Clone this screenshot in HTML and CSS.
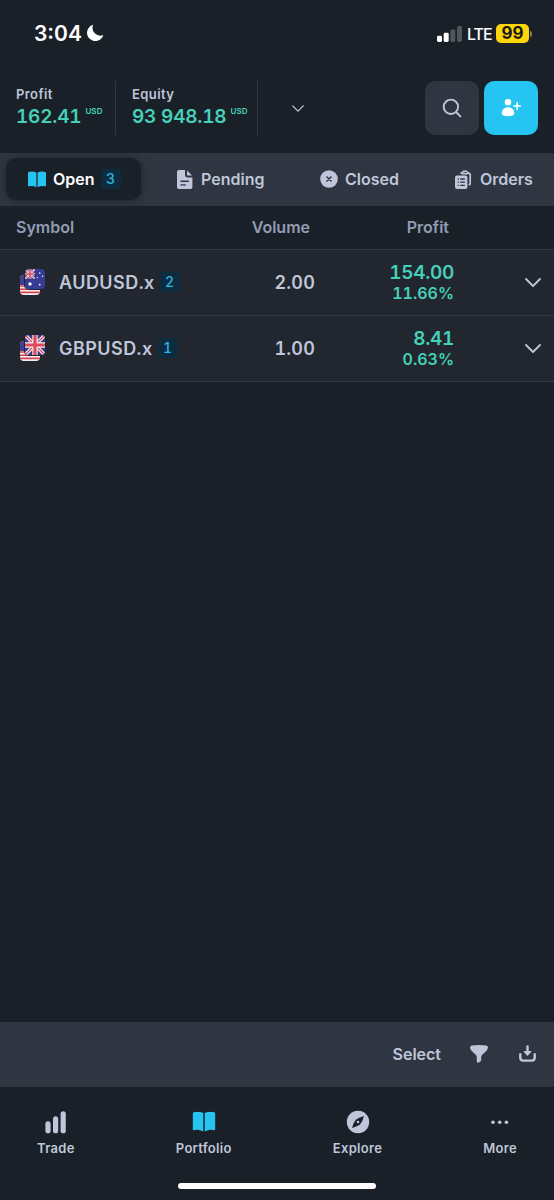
FILE: index.html
```html
<!DOCTYPE html>
<html lang="en">
<head>
    <meta charset="UTF-8">
    <meta name="viewport" content="width=device-width, initial-scale=1.0">
    <title>Portfolio</title>
    <link rel="stylesheet" href="styles.css">
</head>
<body>
    <!-- Shared shapes -->
    <svg class="defs" width="0" height="0">
        <symbol id="book" viewBox="0 0 24 22">
            <path d="M0 2.2Q0 1.2 1 .9Q6-.8 11.2 1.6V21.4Q6 18.6 1 20Q0 20.3 0 19.3ZM12.8 1.6Q18-.8 23 .9Q24 1.2 24 2.2V19.3Q24 20.3 23 20Q18 18.6 12.8 21.4Z"/>
        </symbol>
        <symbol id="chevron" viewBox="0 0 16 9">
            <path d="M1 1l7 7 7-7" fill="none" stroke="currentColor" stroke-width="1.8" stroke-linecap="round" stroke-linejoin="round"/>
        </symbol>
        <symbol id="us" viewBox="0 0 20 20">
            <rect width="20" height="20" fill="#f3eef2"/>
            <path d="M0 1.4h20M0 4.6h20M0 7.8h20M0 11h20M0 14.2h20M0 17.4h20" stroke="#d8454f" stroke-width="1.6"/>
            <rect width="10" height="10" fill="#3a4192"/>
        </symbol>
        <symbol id="gb" viewBox="0 0 20 20">
            <rect width="20" height="20" fill="#35398f"/>
            <path d="M0 0l20 20M20 0L0 20" stroke="#f3eef2" stroke-width="3.6"/>
            <path d="M0 0l20 20M20 0L0 20" stroke="#dd4a57" stroke-width="1.3"/>
            <path d="M10 0v20M0 10h20" stroke="#f3eef2" stroke-width="5.4"/>
            <path d="M10 0v20M0 10h20" stroke="#dd4a57" stroke-width="3.2"/>
        </symbol>
        <symbol id="au" viewBox="0 0 20 20">
            <rect width="20" height="20" fill="#363b94"/>
            <use href="#gb" width="10" height="10"/>
            <g fill="#fff">
                <circle cx="5" cy="15" r="1.7"/>
                <circle cx="14.7" cy="4" r=".8"/>
                <circle cx="12.3" cy="8.6" r=".7"/>
                <circle cx="17.6" cy="7.2" r=".8"/>
                <circle cx="14.7" cy="15.6" r=".9"/>
            </g>
        </symbol>
    </svg>

    <div class="status-bar">
        <span class="time">3:04</span>
        <svg class="moon" viewBox="0 0 18 18"><path d="M6.5.8A8.8 8.8 0 1 0 17.3 11.7A8.3 8.3 0 0 1 6.5.8Z"/></svg>
        <svg class="signal" viewBox="0 0 25 16">
            <rect y="9.8" width="5" height="6.2" rx="1.4" fill="#fff"/>
            <rect x="6.7" y="6.8" width="5" height="9.2" rx="1.4" fill="#fff"/>
            <rect x="13.3" y="3.6" width="5" height="12.4" rx="1.4" fill="#51555c"/>
            <rect x="20" width="5" height="16" rx="1.4" fill="#51555c"/>
        </svg>
        <span class="carrier">LTE</span>
        <span class="battery">99</span>
        <span class="battery-tip"></span>
    </div>

    <header>
        <div class="stat stat-profit">
            <div class="stat-label">Profit</div>
            <div class="stat-value">162.41<sup>USD</sup></div>
        </div>
        <div class="stat stat-equity">
            <div class="stat-label">Equity</div>
            <div class="stat-value">93 948.18<sup>USD</sup></div>
        </div>
        <svg class="chevron-small"><use href="#chevron"/></svg>
        <button class="btn">
            <svg class="outline" width="20" height="20" viewBox="0 0 20 20" stroke-width="1.9"><circle cx="8.9" cy="8.8" r="7.2"/><path d="M14 14l4.4 4.4"/></svg>
        </button>
        <button class="btn btn-primary">
            <svg width="20" height="20" viewBox="0 0 20 20"><circle cx="7" cy="4.3" r="3.3"/><path d="M.7 15.6C.7 11.8 3.3 9.2 7 9.2S13.3 11.8 13.3 15.6C13.3 17.3 10.6 18.2 7 18.2S.7 17.3.7 15.6Z"/><path d="M16.2 4.7v6.6M12.9 8h6.6" stroke="currentColor" stroke-width="1.7" stroke-linecap="round"/></svg>
        </button>
    </header>

    <nav class="tabs">
        <a class="tab tab-open active">
            <svg width="18" height="17"><use href="#book"/></svg>
            <span>Open</span>
            <span class="badge">3</span>
        </a>
        <a class="tab tab-pending">
            <svg width="16" height="19" viewBox="0 0 16 19"><path d="M2 0H8V5Q8 7.4 10.4 7.4H15.4V17Q15.4 19 13.4 19H2Q0 19 0 17V2Q0 0 2 0Z"/><path d="M10 .4L15.1 5.6H11.2Q10 5.6 10 4.4Z"/><path d="M4 11.3h7.4M4 14.9h4.2" stroke="#303641" stroke-width="1.4" stroke-linecap="round"/></svg>
            <span>Pending</span>
        </a>
        <a class="tab tab-closed">
            <svg width="18" height="18" viewBox="0 0 18 18"><circle cx="9" cy="9" r="8.8"/><path d="M7 7l4 4M11 7l-4 4" stroke="#303641" stroke-width="1.6" stroke-linecap="round"/></svg>
            <span>Closed</span>
        </a>
        <a class="tab tab-orders">
            <svg width="17" height="19" viewBox="0 0 17 19"><path d="M5.4 3.2H13.4Q15.2 3.2 15.2 5V13Q15.2 14.8 13.6 14.8" fill="none" stroke="currentColor" stroke-width="1.7"/><path d="M6 3.2Q7 .2 10 .2T14 3.2L12.6 4.4H7.4Z"/><path d="M8.4 2.4h3.4" stroke="#303641" stroke-width=".8"/><rect y="5.4" width="12.4" height="13.6" rx="2"/><path d="M2.7 9h1.2M2.7 12.2h1.2M2.7 15.4h1.2M5.2 9h4.6M5.2 12.2h4.6M5.2 15.4h4.6" stroke="#303641" stroke-width="1.3"/></svg>
            <span>Orders</span>
        </a>
    </nav>

    <main>
        <div class="row row-head">
            <div class="symbol">Symbol</div>
            <div class="volume">Volume</div>
            <div class="profit">Profit</div>
        </div>
        <div class="row">
            <div class="symbol">
                <div class="flags">
                    <svg class="flag flag-back"><use href="#us"/></svg>
                    <svg class="flag flag-front"><use href="#au"/></svg>
                </div>
                <span class="name">AUDUSD.x</span>
                <span class="badge">2</span>
            </div>
            <div class="volume">2.00</div>
            <div class="profit">
                <div class="amount">154.00</div>
                <div class="percent">11.66%</div>
            </div>
            <svg class="chevron"><use href="#chevron"/></svg>
        </div>
        <div class="row">
            <div class="symbol">
                <div class="flags">
                    <svg class="flag flag-back"><use href="#us"/></svg>
                    <svg class="flag flag-front"><use href="#gb"/></svg>
                </div>
                <span class="name">GBPUSD.x</span>
                <span class="badge">1</span>
            </div>
            <div class="volume">1.00</div>
            <div class="profit">
                <div class="amount">8.41</div>
                <div class="percent">0.63%</div>
            </div>
            <svg class="chevron"><use href="#chevron"/></svg>
        </div>
    </main>

    <div class="toolbar">
        <span class="select">Select</span>
        <svg class="filter" width="18" height="18" viewBox="0 0 18 18"><path d="M1.8.5Q9-.3 16.2.5Q18 .8 18 2.6Q17.8 5 15 7.3L12 10Q11.2 10.8 11.2 12V15.2Q11 16.3 9.2 17.3Q7.2 18.4 6.8 16.5V12Q6.8 10.9 5.9 10L2.5 6.7Q.2 4.6 0 2.6Q0 .8 1.8.5Z"/></svg>
        <svg class="outline" width="17" height="17" viewBox="0 0 17 17" stroke-width="2.4"><path d="M1.3 9.3V12.4Q1.3 15.6 4.4 15.6H12.6Q15.7 15.6 15.7 12.4V9.3"/><path d="M8.5 1.4V7"/><path d="M5.3 6.6H11.7L8.5 10.2Z" fill="currentColor" stroke-width="1.2" stroke-linejoin="round"/></svg>
    </div>

    <nav class="bottom-nav">
        <a>
            <svg viewBox="0 0 24 24"><rect x="1.4" y="11.3" width="5.2" height="12" rx="2.6"/><rect x="9" y="6.2" width="5.2" height="17.1" rx="2.6"/><rect x="16.6" y="1.2" width="5.2" height="22.1" rx="2.6"/></svg>
            Trade
        </a>
        <a>
            <svg class="book"><use href="#book" y="1.5" height="20.5"/></svg>
            Portfolio
        </a>
        <a>
            <svg viewBox="0 0 24 24"><circle cx="12" cy="12" r="11.2"/><path d="M18 6Q16.6 11.6 14.2 14.2Q11.6 16.6 6 18Q7.4 12.4 9.8 9.8Q12.4 7.4 18 6Z" fill="#1a2028"/><circle cx="12" cy="12" r="1.3"/></svg>
            Explore
        </a>
        <a>
            <svg viewBox="0 0 24 24"><circle cx="5" cy="12.2" r="1.8"/><circle cx="11.7" cy="12.2" r="1.8"/><circle cx="18.4" cy="12.2" r="1.8"/></svg>
            More
        </a>
    </nav>
    <div class="home-bar"></div>
</body>
</html>
```
FILE: styles.css
```css
:root {
    --background-color: #1a2028;
    --panel-color: #303641;
    --row-color: #22262f;
    --line-color: #30373f;
    --text-color: #bfc6d9;
    --muted-color: #929cb3;
    --green: #44d1b8;
    --blue: #25c4f1;
}

* {
    margin: 0;
    padding: 0;
    box-sizing: border-box;
}

body {
    height: 1200px;
    display: flex;
    flex-direction: column;
    overflow: hidden;
    font-family: Inter, sans-serif;
    font-weight: 600;
    font-variant-numeric: tabular-nums;
    background-color: var(--background-color);
    color: var(--text-color);
}

svg {
    display: block;
    flex: none;
    fill: currentColor;
}

.outline {
    fill: none;
    stroke: currentColor;
    stroke-linecap: round;
}

.defs {
    position: absolute;
}

.status-bar {
    height: 67px;
    padding: 0 22px 0 34px;
    display: flex;
    align-items: center;
    color: #fff;
}

.time {
    width: 53px;
    font-size: 21px;
    font-variant-numeric: normal;
}

.moon {
    width: 17px;
    height: 17px;
    margin-bottom: 2px;
}

.signal {
    width: 25px;
    height: 16px;
    margin-left: auto;
}

.carrier {
    width: 34px;
    padding-left: 5px;
    font-size: 16px;
    font-weight: 500;
    letter-spacing: -1px;
}

.battery {
    width: 33px;
    height: 19px;
    border-radius: 5px;
    background-color: #ffd60a;
    color: #1a1a10;
    font-size: 17px;
    font-weight: 700;
    line-height: 19px;
    text-align: center;
}

.battery-tip {
    width: 2px;
    height: 6px;
    margin-left: 1px;
    border-radius: 0 2px 2px 0;
    background-color: #8c8032;
}

header {
    height: 86px;
    padding: 14px 16px 18px;
    display: flex;
}

.stat {
    padding-top: 5px;
    border-right: 1px solid var(--line-color);
}

.stat-profit {
    width: 100px;
}

.stat-equity {
    width: 142px;
    padding-left: 16px;
}

.stat-label {
    font-size: 13px;
    line-height: 17px;
    letter-spacing: 0.4px;
}

.stat-value {
    color: var(--green);
    font-size: 19px;
    line-height: 28px;
    letter-spacing: -0.2px;
    white-space: nowrap;
}

.stat-value sup {
    display: inline-block;
    margin-left: 4px;
    font-size: 8px;
    line-height: 10px;
    letter-spacing: 0.1px;
    vertical-align: 9px;
}

.chevron-small {
    width: 12px;
    height: 7px;
    margin: 24px auto 0 34px;
}

.btn {
    width: 54px;
    height: 54px;
    margin-left: 5px;
    display: flex;
    align-items: center;
    justify-content: center;
    border: none;
    border-radius: 10px;
    background-color: var(--panel-color);
    color: var(--text-color);
}

.btn-primary {
    background-color: var(--blue);
    color: #fff;
}

.tabs {
    height: 53px;
    padding: 5px 0 6px 6px;
    display: flex;
    background-color: var(--panel-color);
}

.tab {
    display: flex;
    align-items: center;
    font-size: 16px;
}

.tab svg {
    margin-right: 8px;
}

.tab-open {
    width: 135px;
    padding-left: 22px;
    margin-right: 36px;
}

.tab-pending {
    width: 143px;
}

.tab-closed {
    width: 135px;
}

.tab-closed svg,
.tab-open svg {
    margin-right: 7px;
}

.active {
    border-radius: 10px;
    background-color: var(--background-color);
    color: #fff;
    box-shadow: 0 1px 6px rgba(20, 25, 33, 0.6);
}

.active svg {
    color: var(--blue);
}

.badge {
    width: 20px;
    height: 20px;
    margin-left: 6px;
    border-radius: 4px;
    background-color: #0d2c40;
    color: #2fb5e0;
    font-size: 14px;
    font-weight: 500;
    line-height: 20px;
    text-align: center;
}

.row {
    height: 66px;
    padding: 0 13px 0 16px;
    display: flex;
    align-items: center;
    border-bottom: 1px solid var(--line-color);
    background-color: var(--row-color);
}

.row-head {
    height: 44px;
    padding-bottom: 2px;
    background-color: var(--background-color);
    color: var(--muted-color);
    font-size: 16px;
}

.symbol {
    width: 200px;
    display: flex;
    align-items: center;
}

.symbol .badge {
    margin: 0 0 2px 5px;
}

.flags {
    width: 43px;
    height: 26px;
    padding-left: 4px;
    position: relative;
}

.flag {
    width: 20px;
    height: 20px;
    position: absolute;
    border-radius: 4px;
}

.flag-back {
    left: 4px;
    bottom: 1px;
}

.flag-front {
    left: 9px;
    top: -1px;
    box-shadow: 0 0 0 1px var(--row-color);
}

.name {
    font-size: 18px;
    letter-spacing: 0.45px;
}

.volume {
    width: 99px;
    text-align: right;
    font-size: 18px;
    letter-spacing: 0.2px;
}

.profit {
    width: 139px;
    text-align: right;
    color: var(--green);
}

.amount {
    font-size: 19px;
    line-height: 22px;
    letter-spacing: -0.3px;
}

.percent {
    margin-top: -1px;
    font-size: 16px;
    line-height: 20px;
}

.row-head .volume {
    width: 94px;
    font-size: 16px;
    letter-spacing: 0;
}

.row-head .profit {
    color: inherit;
}

.chevron {
    width: 16px;
    height: 9px;
    margin-left: auto;
}

.toolbar {
    height: 65px;
    margin-top: auto;
    padding: 0 18px 2px 0;
    display: flex;
    align-items: center;
    justify-content: flex-end;
    background-color: var(--panel-color);
    font-size: 16px;
}

.toolbar svg {
    margin-left: 31px;
}

.toolbar .filter {
    margin-left: 29px;
}

.bottom-nav {
    height: 96px;
    padding: 23px 37px 0;
    display: flex;
    justify-content: space-between;
}

.bottom-nav a {
    display: flex;
    flex-direction: column;
    align-items: center;
    font-size: 13px;
    line-height: 16px;
    letter-spacing: 0.3px;
}

.bottom-nav svg {
    width: 24px;
    height: 24px;
    margin-bottom: 6px;
}

.bottom-nav .book {
    color: var(--blue);
}

.home-bar {
    width: 198px;
    height: 6px;
    margin: 0 auto 11px;
    border-radius: 4px;
    background-color: #fff;
}
```
